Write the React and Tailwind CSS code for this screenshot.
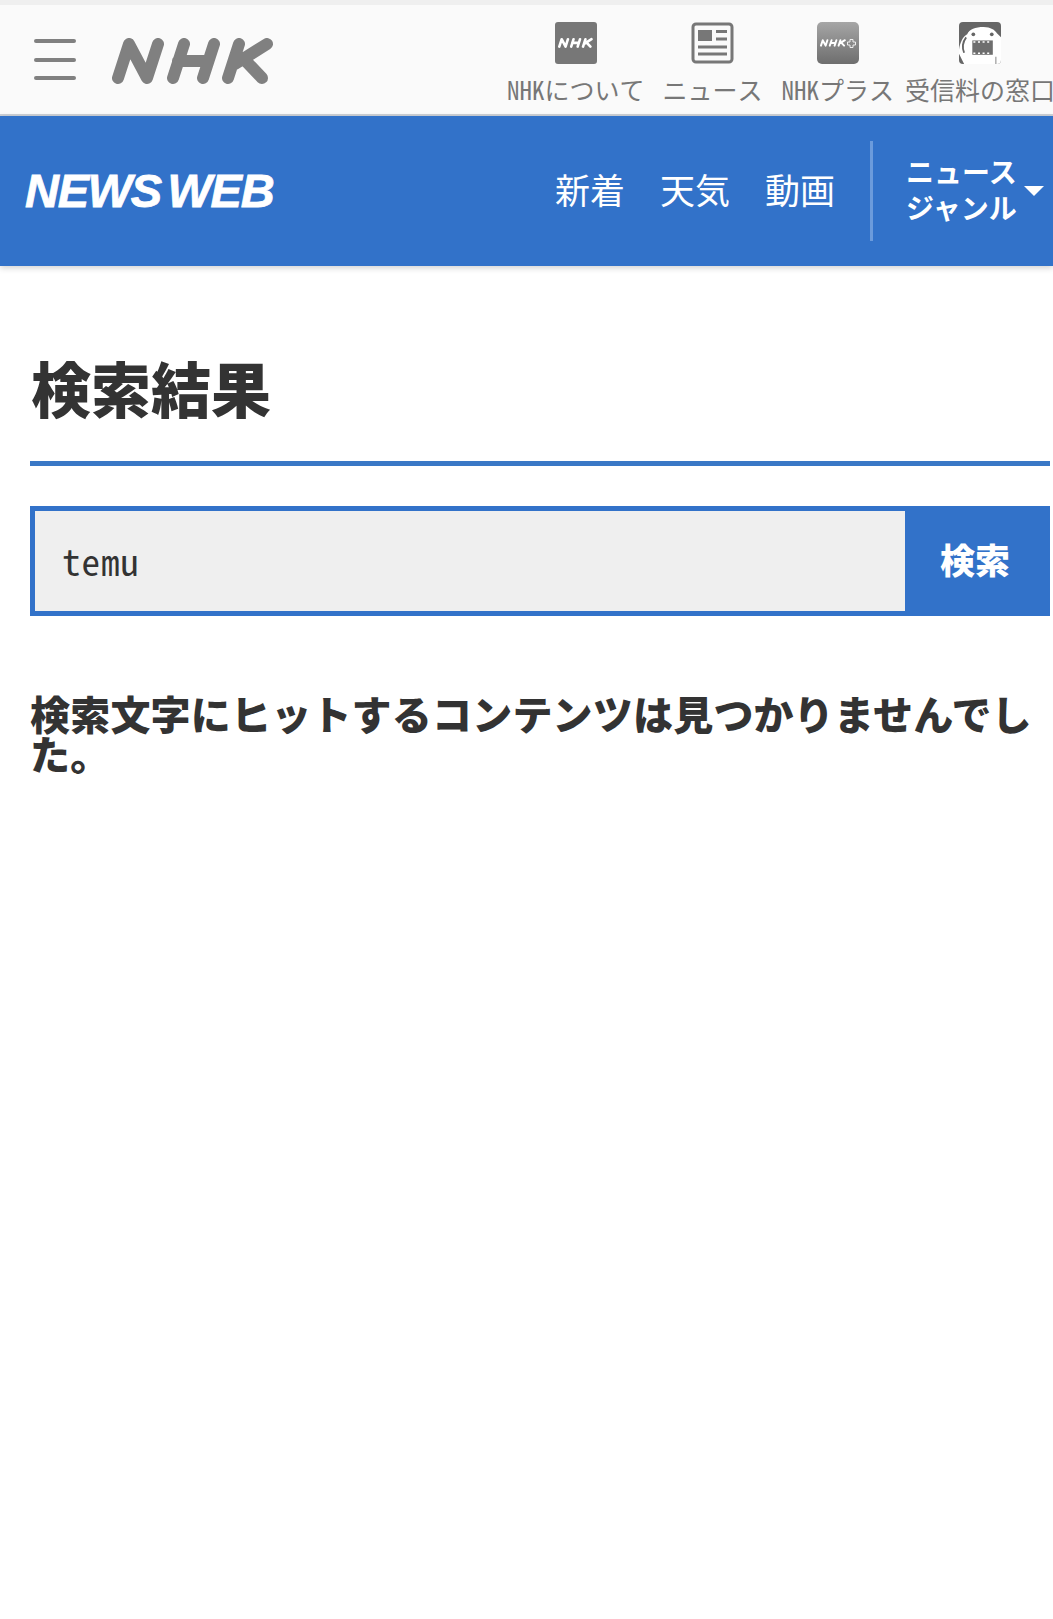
import React from "react";

const JP = "font-['Noto_Sans_CJK_JP','Noto_Sans',sans-serif]";
const MONO = "font-['Noto_Sans_Mono_CJK_JP','Noto_Sans_CJK_JP',monospace]";

// rounded-stroke NHK mark, also reused small inside the menu icons
const NhkMark = ({ className, color = "#808080" }) => (
  <svg className={className} viewBox="112 37 162 47" fill="none" stroke={color} strokeWidth="12" strokeLinecap="round" strokeLinejoin="round">
    <path d="M118 77L129 43L147 77L158 43" />
    <path d="M173 77L184 43M203 77L214 43M178 60H208" />
    <path d="M228 77L239 43M267 43L235 63M243 57L262 77" />
  </svg>
);

const NewsIcon = () => (
  <svg className="w-[43px] h-[42px]" viewBox="0 0 43 42" fill="none">
    <rect x="2" y="2" width="39" height="38" rx="3" fill="#fafafa" stroke="#777" strokeWidth="3" />
    <rect x="7" y="8" width="14" height="11" fill="#777" />
    <path d="M25 9.5H36M25 17H36M7 25H36M7 32H36" stroke="#777" strokeWidth="3" />
  </svg>
);

const DomoIcon = () => (
  <svg className="w-[42px] h-[42px] rounded-[4px]" viewBox="0 0 41 41">
    <rect width="41" height="41" fill="#666" />
    <path d="M0 27C1 20 4 14 8 12C10 7 16 5 24 5C31 5 35 8 37 11L41 15V41H5L0 31Z" fill="#fff" />
    <path d="M7 15C4 19 3 25 5 30" stroke="#666" strokeWidth="1.8" fill="none" />
    <path d="M36 34V41" stroke="#888" strokeWidth="1" />
    <circle cx="14" cy="12" r="1.8" fill="#666" />
    <circle cx="32" cy="12" r="1.8" fill="#666" />
    <rect x="13" y="18" width="20" height="14" fill="#6e6e6e" />
    <path d="M14 19.5H32M14 30.5H32" stroke="#fff" strokeWidth="1.5" strokeDasharray="2 2.5" />
  </svg>
);

const TopItem = ({ label, className, children }) => (
  <div className={`flex flex-col items-center shrink-0 ${className}`}>
    <div className="h-[42px] flex items-center justify-center">{children}</div>
    <span className={`${MONO} mt-[9px] text-[25px] leading-[32px] text-[#777] whitespace-nowrap`}>{label}</span>
  </div>
);

export default function App() {
  return (
    <div className="min-h-[1619px] bg-white overflow-hidden">
      <div className="h-[5px] bg-[#efefef]" />
      <header className="h-[111px] bg-[#fafafa] border-b-2 border-[#ccd0d6] flex pl-[34px]">
        <div className="w-[42px] mt-[34px] h-[41px] flex flex-col justify-between shrink-0">
          <span className="block h-[4px] rounded-full bg-[#808080]" />
          <span className="block h-[4px] rounded-full bg-[#808080]" />
          <span className="block h-[4px] rounded-full bg-[#808080]" />
        </div>
        <NhkMark className="w-[162px] h-[47px] ml-[36px] mt-[33px] shrink-0" />
        <div className="flex ml-[233px] pt-[17px]">
          <TopItem label="NHKについて">
            <div className="w-[42px] h-[42px] rounded-[3px] bg-[#777] flex items-center justify-center">
              <NhkMark className="w-[35px] h-[12px]" color="#fff" />
            </div>
          </TopItem>
          <TopItem label="ニュース" className="ml-[18px]">
            <NewsIcon />
          </TopItem>
          <TopItem label="NHKプラス" className="ml-[19px]">
            <div className="w-[42px] h-[42px] rounded-[5px] bg-gradient-to-b from-[#a6a6a6] to-[#6e6e6e] flex items-center justify-center gap-[1px]">
              <NhkMark className="w-[26px] h-[8px]" color="#fff" />
              <svg className="w-[9px] h-[9px]" viewBox="0 0 9 9" fill="none" stroke="#eee" strokeWidth="1">
                <path d="M3 .5H6V3H8.5V6H6V8.5H3V6H.5V3H3Z" />
              </svg>
            </div>
          </TopItem>
          <TopItem label="受信料の窓口" className="ml-[11px]">
            <DomoIcon />
          </TopItem>
        </div>
      </header>

      <nav className="h-[150px] bg-[#3272c9] flex items-center pl-[25px] shadow-[0_2px_6px_rgba(0,0,0,0.18)] relative">
        <span className="font-['Liberation_Sans',sans-serif] italic font-bold text-[47px] leading-none tracking-[-1.3px] [word-spacing:-5px] [-webkit-text-stroke:0.8px_white] text-white whitespace-nowrap w-[530px] shrink-0 -mt-[2px]">
          NEWS WEB
        </span>
        <div className={`${JP} flex gap-[35px] text-[35px] leading-[44px] text-white shrink-0 -mt-[5px]`}>
          <span>新着</span>
          <span>天気</span>
          <span>動画</span>
        </div>
        <div className="w-[3px] h-[100px] bg-[#6b9bdc] ml-[35px] shrink-0" />
        <div className={`${JP} ml-[33px] w-[112px] -mt-[5px] text-[28px] leading-[36px] font-bold text-white shrink-0`}>
          ニュース
          <br />
          ジャンル
        </div>
        <div className="ml-[6px] w-0 h-0 border-x-[10px] border-x-transparent border-t-[10px] border-t-white shrink-0" />
      </nav>

      <main className={`${JP} pl-[30px] pr-[3px] text-[#333]`}>
        <h1 className="pt-[91px] text-[60px] leading-[60px] font-black pl-[1px]">検索結果</h1>
        <div className="mt-[44px] h-[5px] bg-[#3a78c6]" />
        <div className="mt-[40px] h-[110px] flex border-[5px] border-[#3272c9] bg-[#3272c9]">
          <input
            defaultValue="temu"
            readOnly
            className={`${MONO} flex-1 min-w-0 bg-[#efefef] pl-[27px] text-[37px] tracking-[1px] text-[#333] outline-none`}
          />
          <div className="w-[140px] flex items-center justify-center text-[35px] font-black text-white shrink-0 pb-[4px]">検索</div>
        </div>
        <p className="mt-[77px] text-[40px] leading-[40px] font-black tracking-[0.2px]">検索文字にヒットするコンテンツは見つかりませんでした。</p>
      </main>
    </div>
  );
}
